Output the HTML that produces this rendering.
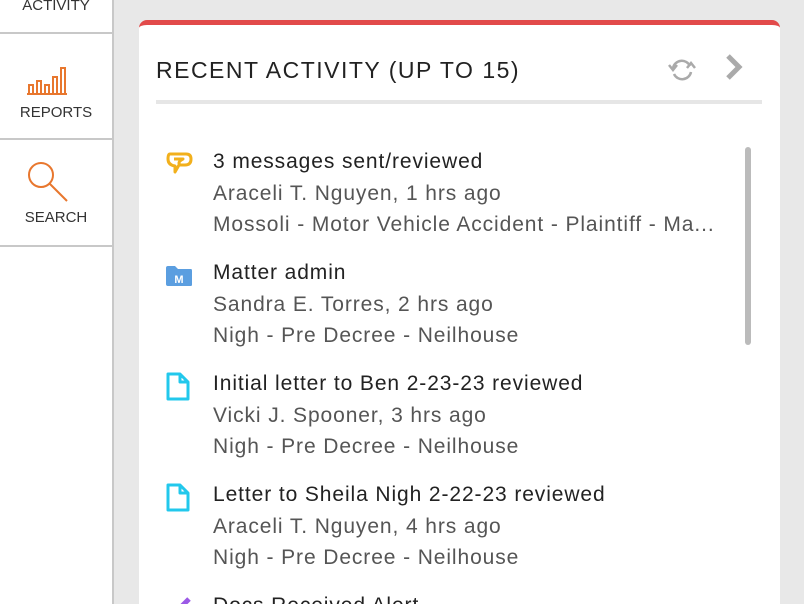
<!DOCTYPE html>
<html><head><style>
html,body{margin:0;width:804px;height:604px;overflow:hidden;}
body{background:#e8e8e8;position:relative;font-family:"Liberation Sans",sans-serif;}
.side{position:absolute;left:0;top:0;width:112px;height:604px;background:#fff;border-right:2px solid #c8c8c8;}
.sep{position:absolute;left:0;width:112px;height:2px;background:#c8c8c8;}
.lbl{position:absolute;left:0;width:112px;text-align:center;font-size:15px;color:#333;}
.card{position:absolute;left:139px;top:20px;width:641px;height:579px;background:#fff;border-top:5px solid #e24a4a;border-radius:8px 8px 0 0;}
.title{position:absolute;left:17px;top:32px;font-size:23px;color:#222;letter-spacing:1.5px;}
.hr{position:absolute;left:17px;top:75px;width:606px;height:4px;background:#e6e6e6;}
.item{position:absolute;left:74px;font-size:21px;color:#555;line-height:31.5px;letter-spacing:0.9px;}
.item .t{color:#222;}
.item div{white-space:nowrap;}
.ic{position:absolute;left:26px;}
.sb{position:absolute;left:606px;top:122px;width:6px;height:198px;background:#bbb;border-radius:3px;}
</style></head><body>
<div class="side">
<div class="lbl" style="top:-3px">ACTIVITY</div>
<div class="sep" style="top:32px"></div>
<svg style="position:absolute;left:26px;top:66px" width="42" height="30" viewBox="0 0 42 30"><path d="M1 28H41M3 28V19H7V28M11 28V15H15V28M19 28V19H23V28M27 28V11H31V28M35 28V2H39V28" fill="none" stroke="#e8772e" stroke-width="2"/></svg>
<div class="lbl" style="top:104px">REPORTS</div>
<div class="sep" style="top:138px"></div>
<svg style="position:absolute;left:24px;top:158px" width="46" height="46" viewBox="0 0 46 46"><circle cx="17" cy="17" r="12" fill="none" stroke="#e8772e" stroke-width="2"/><path d="M26 26L43 43" stroke="#e8772e" stroke-width="2"/></svg>
<div class="lbl" style="top:209px">SEARCH</div>
<div class="sep" style="top:245px"></div>
</div>
<div class="card">
<div class="title">RECENT ACTIVITY (UP TO 15)</div>
<svg style="position:absolute;left:527px;top:31px" width="32" height="28" viewBox="0 0 32 28"><path d="M7 12A9 9 0 0 1 24 10M25 16A9 9 0 0 1 8 18" fill="none" stroke="#aaa" stroke-width="2.5"/><path d="M3 9L7 14L11 9M21 12L25 7L29 12" fill="none" stroke="#aaa" stroke-width="2.5"/></svg>
<svg style="position:absolute;left:585px;top:28px" width="20" height="30" viewBox="0 0 20 30"><path d="M4 3L15 14L4 25" fill="none" stroke="#aaa" stroke-width="5"/></svg>
<div class="hr"></div>
<div class="sb"></div>
<svg class="ic" style="top:126px" width="28" height="28" viewBox="0 0 28 28"><path d="M5 3H21Q26 3 26 8Q26 14 20 14H14L10 21V15Q3 14 3 8Q3 3 5 3ZM9 8H18Q12 11 15 14" fill="none" stroke="#f2b01c" stroke-width="3" stroke-linejoin="round"/></svg>
<div class="item" style="top:121px"><div class="t">3 messages sent/reviewed</div><div>Araceli T. Nguyen, 1 hrs ago</div><div>Mossoli - Motor Vehicle Accident - Plaintiff - Ma...</div></div>
<svg class="ic" style="top:240px" width="28" height="22" viewBox="0 0 28 22"><path d="M1 3Q1 1 3 1H10L13 4H26Q27 4 27 6V20Q27 21 25 21H3Q1 21 1 19Z" fill="#5b9ee0"/><text x="14" y="18" font-size="11" font-weight="bold" fill="#fff" text-anchor="middle" font-family="Liberation Sans">M</text></svg>
<div class="item" style="top:232px"><div class="t">Matter admin</div><div>Sandra E. Torres, 2 hrs ago</div><div>Nigh - Pre Decree - Neilhouse</div></div>
<svg class="ic" style="top:347px" width="26" height="30" viewBox="0 0 26 30"><path d="M3 2H15L23 10V27H3Z M15 2V10H23" fill="none" stroke="#22c8ec" stroke-width="3" stroke-linejoin="round"/></svg>
<div class="item" style="top:343px"><div class="t">Initial letter to Ben 2-23-23 reviewed</div><div>Vicki J. Spooner, 3 hrs ago</div><div>Nigh - Pre Decree - Neilhouse</div></div>
<svg class="ic" style="top:458px" width="26" height="30" viewBox="0 0 26 30"><path d="M3 2H15L23 10V27H3Z M15 2V10H23" fill="none" stroke="#22c8ec" stroke-width="3" stroke-linejoin="round"/></svg>
<div class="item" style="top:454px"><div class="t">Letter to Sheila Nigh 2-22-23 reviewed</div><div>Araceli T. Nguyen, 4 hrs ago</div><div>Nigh - Pre Decree - Neilhouse</div></div>
<svg class="ic" style="top:570px" width="28" height="20" viewBox="0 0 28 20"><path d="M10 18L24 4" stroke="#9b59e6" stroke-width="5"/></svg>
<div class="item" style="top:565px"><div class="t">Docs Received Alert</div></div>
</div>
</body></html>
